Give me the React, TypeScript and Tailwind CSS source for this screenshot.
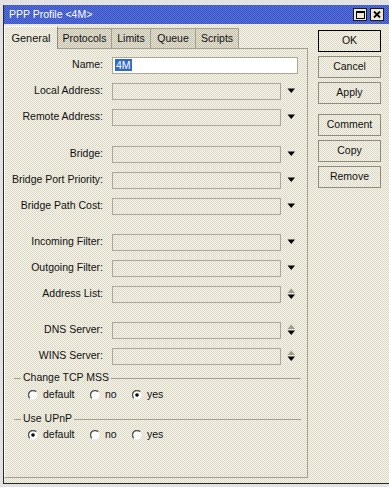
import React from 'react';

// dithered winbox-style backgrounds
const panelBg =
  'bg-[repeating-conic-gradient(#f6f4ea_0_25%,#dcd9c6_0_50%)] bg-[length:2px_2px]';
const tabBg =
  'bg-[repeating-conic-gradient(#e6e3d4_0_25%,#c4c0ac_0_50%)] bg-[length:2px_2px]';
const titleBg =
  'bg-[repeating-conic-gradient(#3451c9_0_25%,#5d74d6_0_50%)] bg-[length:2px_2px]';

function DropArrow() {
  return (
    <svg width="9" height="6" viewBox="0 0 9 6">
      <path d="M0.5 0.5h7.5L4.25 5z" fill="#000" />
    </svg>
  );
}

function UpDown() {
  return (
    <svg width="9" height="12" viewBox="0 0 9 12">
      <path d="M4.25 0.5L8 5H0.5z" fill="#9d9b8c" />
      <path d="M0.5 6.5h7.5L4.25 11z" fill="#000" />
    </svg>
  );
}

function Field({ label, kind }: { label: string; kind: 'combo' | 'updown' }) {
  return (
    <div className="flex h-[26px] items-center">
      <span className="w-[98px] text-right">{label}</span>
      <div className={`ml-[9px] h-[17px] w-[169px] border border-[#aba898] ${panelBg}`} />
      <div className="flex w-[17px] items-center pl-[6px]">
        {kind === 'combo' ? <DropArrow /> : <UpDown />}
      </div>
    </div>
  );
}

function Radio({ checked }: { checked?: boolean }) {
  return (
    <svg width="10" height="10" viewBox="0 0 10 10">
      <circle cx="5" cy="5" r="4.5" fill="#fff" />
      <path d="M8.2 1.8A4.5 4.5 0 0 0 1.8 8.2" stroke="#555" strokeWidth="1.4" fill="none" />
      {checked && <circle cx="5" cy="5" r="1.8" fill="#000" />}
    </svg>
  );
}

function GroupTitle({ title }: { title: string }) {
  return (
    <div className="mr-[6px] ml-[9px] flex h-[14px] items-center">
      <div className="h-px w-[7px] bg-[#a3a092]" />
      <span className="px-[2px]">{title}</span>
      <div className="h-px flex-1 bg-[#a3a092]" />
    </div>
  );
}

function RadioRow({ value }: { value: 'default' | 'no' | 'yes' }) {
  return (
    <div className="ml-[23px] flex items-center">
      <div className="flex w-[62px] items-center gap-[5px]">
        <Radio checked={value === 'default'} />
        <span>default</span>
      </div>
      <div className="flex w-[42px] items-center gap-[5px]">
        <Radio checked={value === 'no'} />
        <span>no</span>
      </div>
      <div className="flex items-center gap-[5px]">
        <Radio checked={value === 'yes'} />
        <span>yes</span>
      </div>
    </div>
  );
}

function Btn({ label, primary, className = '' }: { label: string; primary?: boolean; className?: string }) {
  return (
    <div
      className={`flex h-[22px] w-[63px] items-center justify-center border ${
        primary ? 'border-black' : 'border-[#8f8c7c]'
      } ${className}`}
    >
      {label}
    </div>
  );
}

const tabs = [
  { name: 'Protocols', w: 'w-[54px]' },
  { name: 'Limits', w: 'w-[39px]' },
  { name: 'Queue', w: 'w-[45px]' },
  { name: 'Scripts', w: 'w-[43px]' },
];

export default function App() {
  return (
    <div className="h-[487px] w-[389px] overflow-hidden bg-[#e2e2e2] pt-[5px] pl-[3px] font-['Liberation_Sans',Arial,sans-serif] text-[10.5px] text-[#111]">
      <div className="flex h-[479px] flex-col border-b border-l border-[#2a2a2a]">
        {/* title bar */}
        <div className={`flex h-[19px] items-center justify-between pr-[5px] pl-[5px] ${titleBg}`}>
          <span className="text-[10.5px] text-white">PPP Profile &lt;4M&gt;</span>
          <div className="flex gap-[3px]">
            <div className="flex h-[13px] w-[14px] items-center justify-center border border-[#1a1a1a] bg-[#ece9d8]">
              <div className="h-[8px] w-[9px] border border-t-2 border-black" />
            </div>
            <div className="flex h-[13px] w-[14px] items-center justify-center border border-[#1a1a1a] bg-[#ece9d8]">
              <svg width="8" height="7" viewBox="0 0 8 7">
                <path d="M1 0.5L7 6.5M7 0.5L1 6.5" stroke="#000" strokeWidth="1.8" />
              </svg>
            </div>
          </div>
        </div>

        {/* body */}
        <div className={`flex flex-1 ${panelBg}`}>
          <div className="flex w-[304px] flex-col">
            <div className="flex h-[24px] items-end">
              <div
                className={`relative z-10 -mb-px flex h-[23px] w-[54px] items-center justify-center border-t border-r border-l border-t-white border-r-[#8f8c7c] border-l-white text-[11px] ${panelBg}`}
              >
                General
              </div>
              {tabs.map((t) => (
                <div
                  key={t.name}
                  className={`flex h-[20px] ${t.w} items-center justify-center border-t border-r border-[#a3a092] ${tabBg}`}
                >
                  {t.name}
                </div>
              ))}
            </div>

            <div className="flex h-[430px] flex-col border border-[#a3a092] border-l-white pt-[3px]">
              <div className="flex h-[26px] items-center">
                <span className="w-[98px] text-right">Name:</span>
                <div className="ml-[9px] flex h-[17px] w-[186px] items-center border border-[#aba898] bg-white pl-[2px]">
                  <span className="bg-[#316ac5] px-px leading-[12px] text-white">4M</span>
                </div>
              </div>
              <Field label="Local Address:" kind="combo" />
              <Field label="Remote Address:" kind="combo" />
              <div className="h-[11px]" />
              <Field label="Bridge:" kind="combo" />
              <Field label="Bridge Port Priority:" kind="combo" />
              <Field label="Bridge Path Cost:" kind="combo" />
              <div className="h-[10px]" />
              <Field label="Incoming Filter:" kind="combo" />
              <Field label="Outgoing Filter:" kind="combo" />
              <Field label="Address List:" kind="updown" />
              <div className="h-[10px]" />
              <Field label="DNS Server:" kind="updown" />
              <Field label="WINS Server:" kind="updown" />

              <div className="mt-[2px]">
                <GroupTitle title="Change TCP MSS" />
              </div>
              <div className="flex h-[20px] items-center">
                <RadioRow value="yes" />
              </div>
              <div className="mt-[7px]">
                <GroupTitle title="Use UPnP" />
              </div>
              <div className="flex h-[18px] items-center">
                <RadioRow value="default" />
              </div>
            </div>
          </div>

          {/* buttons */}
          <div className="ml-[10px] flex flex-col gap-[4px] pt-[6px]">
            <Btn label="OK" primary />
            <Btn label="Cancel" />
            <Btn label="Apply" />
            <Btn label="Comment" className="mt-[6px]" />
            <Btn label="Copy" />
            <Btn label="Remove" />
          </div>
        </div>
      </div>
    </div>
  );
}
